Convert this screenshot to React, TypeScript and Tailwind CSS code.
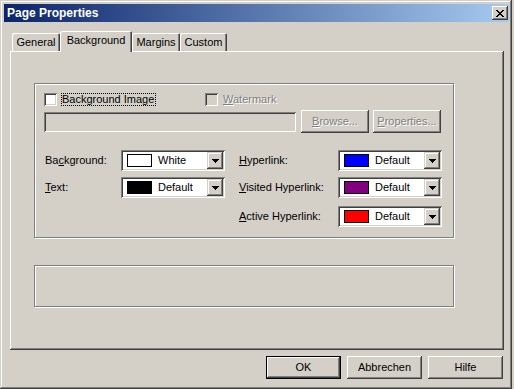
import React from "react";

function CloseX() {
  const px: [number, number][] = [];
  const rows = ["XX....XX", ".XX..XX.", "..XXXX..", "...XX...", "..XXXX..", ".XX..XX.", "XX....XX"];
  rows.forEach((r, y) => r.split("").forEach((c, x) => { if (c === "X") px.push([x, y]); }));
  return (
    <svg width="8" height="7" viewBox="0 0 8 7" shapeRendering="crispEdges">
      {px.map(([x, y]) => <rect key={x + "-" + y} x={x} y={y} width="1" height="1" fill="#000" />)}
    </svg>
  );
}

function DownTri() {
  return (
    <svg width="7" height="4" viewBox="0 0 7 4" shapeRendering="crispEdges">
      <rect x="0" y="0" width="7" height="1" fill="#000" />
      <rect x="1" y="1" width="5" height="1" fill="#000" />
      <rect x="2" y="2" width="3" height="1" fill="#000" />
      <rect x="3" y="3" width="1" height="1" fill="#000" />
    </svg>
  );
}

function Checkbox({ disabled }: { disabled?: boolean }) {
  return (
    <div
      className={
        disabled
          ? "w-[13px] h-[13px] shrink-0 bg-[#d4d0c8] shadow-[inset_1px_1px_#808080,inset_-1px_-1px_#ffffff,inset_2px_2px_#404040,inset_-2px_-2px_#d4d0c8]"
          : "w-[13px] h-[13px] shrink-0 bg-white shadow-[inset_1px_1px_#808080,inset_-1px_-1px_#ffffff,inset_2px_2px_#404040,inset_-2px_-2px_#d4d0c8]"
      }
    />
  );
}

function Combo({ swatch, text }: { swatch: string; text: string }) {
  return (
    <div className="w-[104px] h-[21px] shrink-0 bg-white p-[2px] flex shadow-[inset_1px_1px_#808080,inset_-1px_-1px_#ffffff,inset_2px_2px_#404040,inset_-2px_-2px_#d4d0c8]">
      <div className="flex-1 flex items-center pl-[4px]">
        <div className={"w-[25px] h-[13px] border border-black " + swatch} />
        <span className="ml-[6px] leading-none">{text}</span>
      </div>
      <div className="w-[16px] h-[17px] bg-[#d4d0c8] flex items-center justify-center shadow-[inset_-1px_-1px_#404040,inset_1px_1px_#d4d0c8,inset_-2px_-2px_#808080,inset_2px_2px_#ffffff]">
        <DownTri />
      </div>
    </div>
  );
}

function Btn({ children, def, disabled, w }: { children: React.ReactNode; def?: boolean; disabled?: boolean; w: string }) {
  return (
    <div
      className={
        (def
          ? "border border-black shadow-[inset_-1px_-1px_#404040,inset_1px_1px_#ffffff,inset_-2px_-2px_#808080] "
          : "shadow-[inset_-1px_-1px_#404040,inset_1px_1px_#ffffff,inset_-2px_-2px_#808080,inset_2px_2px_#d4d0c8] ") +
        w +
        " h-[23px] shrink-0 flex items-center justify-center leading-none " +
        (disabled ? "text-[#808080] [text-shadow:1px_1px_0_#ffffff]" : "text-black")
      }
    >
      {children}
    </div>
  );
}

function Tab({ label, selected, w }: { label: string; selected?: boolean; w: string }) {
  return (
    <div
      className={
        selected
          ? w + " h-[21px] -mb-[1px] relative z-10 bg-[#d4d0c8] rounded-tl-[2px] rounded-tr-[2px] flex items-center justify-center pb-[3px] shadow-[inset_1px_1px_#ffffff,inset_-1px_0_#404040,inset_-2px_0_#808080]"
          : w + " h-[18px] bg-[#d4d0c8] rounded-tl-[2px] rounded-tr-[2px] flex items-center justify-center shadow-[inset_1px_1px_#ffffff,inset_-1px_0_#404040,inset_-2px_0_#808080]"
      }
    >
      <span className="leading-none">{label}</span>
    </div>
  );
}

export default function App() {
  return (
    <div className="w-[514px] h-[389px] bg-[#d4d0c8] font-['Liberation_Sans',Arial,sans-serif] text-[11px] text-black overflow-hidden">
      <div className="w-[512px] h-[389px] flex flex-col pt-[4px] pl-[4px] pr-[3px] shadow-[inset_-1px_-1px_#404040,inset_1px_1px_#d4d0c8,inset_-2px_-2px_#808080,inset_2px_2px_#ffffff]">
        {/* Title bar */}
        <div className="h-[18px] flex items-center justify-between pl-[3px] pr-[1px] bg-[linear-gradient(to_right,#0a246a,#a6caf0)]">
          <span className="text-white font-bold text-[12px] leading-none">Page Properties</span>
          <div className="w-[16px] h-[14px] bg-[#d4d0c8] flex items-center justify-center shadow-[inset_-1px_-1px_#404040,inset_1px_1px_#ffffff,inset_-2px_-2px_#808080,inset_2px_2px_#d4d0c8]">
            <CloseX />
          </div>
        </div>

        {/* Tabs + panel */}
        <div className="ml-[6px] mt-[9px] w-[494px]">
          <div className="h-[20px] flex items-end pl-[2px]">
            <Tab label="General" w="w-[48px]" />
            <Tab label="Background" w="w-[72px]" selected />
            <Tab label="Margins" w="w-[48px]" />
            <Tab label="Custom" w="w-[47px]" />
          </div>
          <div className="w-[494px] h-[299px] bg-[#d4d0c8] pl-[24px] pt-[32px] shadow-[inset_-1px_-1px_#404040,inset_1px_1px_#ffffff,inset_-2px_-2px_#808080]">
            {/* Group box */}
            <div className="w-[420px] h-[155px] border border-[#808080] shadow-[inset_1px_1px_#ffffff,1px_1px_#ffffff] pl-[9px] pt-[9px]">
              <div className="flex items-center h-[13px]">
                <div className="w-[161px] flex items-center">
                  <Checkbox />
                  <div className="ml-[4px] h-[13px] border border-dotted border-black flex items-center pr-[1px]">
                    <span className="leading-none">Background Image</span>
                  </div>
                </div>
                <Checkbox disabled />
                <span className="ml-[5px] leading-none text-[#808080] [text-shadow:1px_1px_0_#ffffff]">
                  <span className="underline">W</span>atermark
                </span>
              </div>
              <div className="mt-[4px] flex items-center h-[23px]">
                <div className="w-[252px] h-[20px] bg-[#d4d0c8] shadow-[inset_1px_1px_#808080,inset_-1px_-1px_#ffffff,inset_2px_2px_#404040,inset_-2px_-2px_#d4d0c8]" />
                <div className="ml-[5px]">
                  <Btn w="w-[68px]" disabled>
                    <span><span className="underline">B</span>rowse...</span>
                  </Btn>
                </div>
                <div className="ml-[4px]">
                  <Btn w="w-[68px]" disabled>
                    <span><span className="underline">P</span>roperties...</span>
                  </Btn>
                </div>
              </div>
              <div className="mt-[17px] flex">
                <div className="w-[181px] flex flex-col">
                  <div className="h-[21px] flex items-center justify-between">
                    <span className="ml-[1px] leading-none">Ba<span className="underline">c</span>kground:</span>
                    <Combo swatch="bg-white" text="White" />
                  </div>
                  <div className="mt-[6px] h-[21px] flex items-center justify-between">
                    <span className="ml-[1px] leading-none"><span className="underline">T</span>ext:</span>
                    <Combo swatch="bg-black" text="Default" />
                  </div>
                </div>
                <div className="ml-[14px] w-[203px] flex flex-col">
                  <div className="h-[21px] flex items-center justify-between">
                    <span className="leading-none"><span className="underline">H</span>yperlink:</span>
                    <Combo swatch="bg-[#0000ff]" text="Default" />
                  </div>
                  <div className="mt-[6px] h-[21px] flex items-center justify-between">
                    <span className="leading-none"><span className="underline">V</span>isited Hyperlink:</span>
                    <Combo swatch="bg-[#800080]" text="Default" />
                  </div>
                  <div className="mt-[8px] h-[21px] flex items-center justify-between">
                    <span className="leading-none"><span className="underline">A</span>ctive Hyperlink:</span>
                    <Combo swatch="bg-[#ff0000]" text="Default" />
                  </div>
                </div>
              </div>
            </div>
            {/* Second box */}
            <div className="mt-[27px] w-[420px] h-[42px] border border-[#808080] shadow-[inset_1px_1px_#ffffff,1px_1px_#ffffff]" />
          </div>
        </div>

        {/* Buttons */}
        <div className="ml-[6px] w-[494px] mt-[6px] flex justify-end gap-[6px] pr-[1px]">
          <Btn w="w-[75px]" def>OK</Btn>
          <Btn w="w-[75px]">Abbrechen</Btn>
          <Btn w="w-[75px]">Hilfe</Btn>
        </div>
      </div>
    </div>
  );
}
